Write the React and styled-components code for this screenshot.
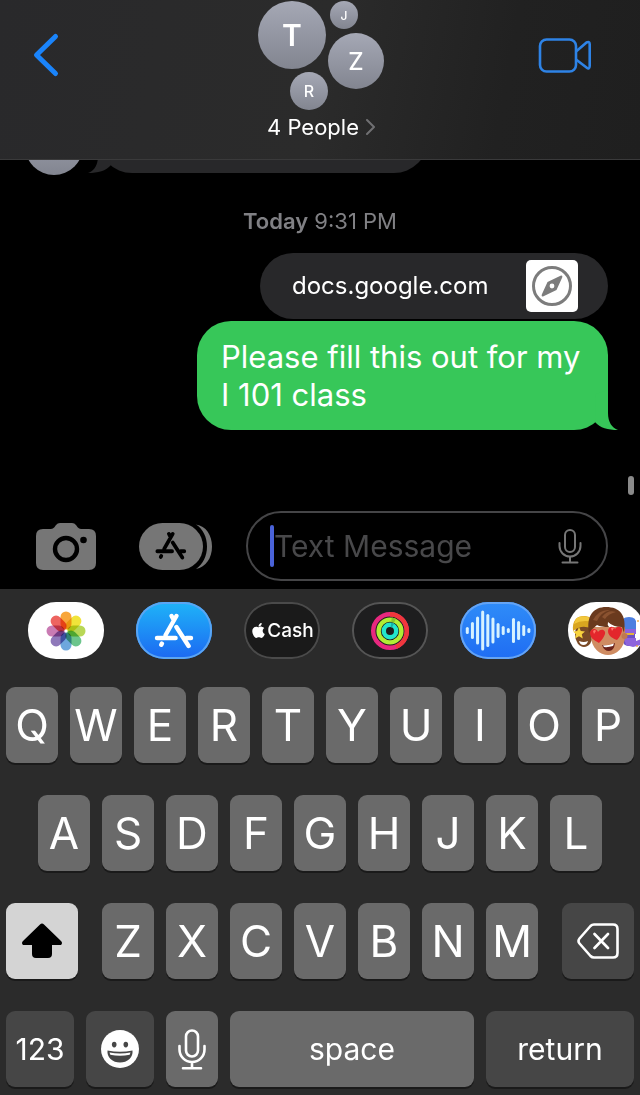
import React from "react";
import styled, { createGlobalStyle } from "styled-components";
import { FaApple } from "react-icons/fa";

const GlobalStyle = createGlobalStyle`
  *, *::before, *::after { box-sizing: border-box; }
  body {
    margin: 0;
    background: #000;
    color: #fff;
    font-family: Inter, "Liberation Sans", sans-serif;
  }
  button {
    font: inherit;
    color: inherit;
    border: 0;
    padding: 0;
    background: none;
    cursor: pointer;
  }
  svg { display: block; }
`;

const Screen = styled.div`
  display: flex;
  flex-direction: column;
  height: 100vh;
  overflow: hidden;
`;

/* ---------- header ---------- */

const Header = styled.header`
  flex: none;
  display: grid;
  grid-template-columns: 1fr auto 1fr;
  align-items: start;
  height: 160px;
  padding: 0 48px 0 32px;
  border-bottom: 1px solid #3a3a3b;
  background: linear-gradient(100deg, #29292b 0%, #2b2b2b 50%, #212121 78%, #1f1f1f 100%);
`;

const BackButton = styled.button`
  justify-self: start;
  margin-top: 32px;
`;

const VideoButton = styled.button`
  justify-self: end;
  margin-top: 36px;
`;

const Group = styled.button`
  display: flex;
  flex-direction: column;
  align-items: center;
  padding-top: 1px;
  margin-left: 18px;
`;

const Cluster = styled.span`
  display: flex;
  height: 110px;
`;

const ClusterColumn = styled.span`
  display: flex;
  flex-direction: column;
  gap: ${(p) => p.$gap}px;
  width: ${(p) => p.$width}px;
`;

const Avatar = styled.span`
  flex: none;
  display: flex;
  align-items: center;
  justify-content: center;
  width: ${(p) => p.$size}px;
  height: ${(p) => p.$size}px;
  align-self: ${(p) => p.$align || "flex-start"};
  margin-left: ${(p) => p.$indent || 0}px;
  border-radius: 50%;
  background: linear-gradient(#a5a8b5, #828590);
  font-size: ${(p) => p.$font || 16}px;
  font-weight: ${(p) => p.$weight || 500};
`;

const GroupLabel = styled.span`
  display: flex;
  align-items: center;
  gap: 7px;
  font-size: 22px;
  line-height: 32px;
`;

/* ---------- thread ---------- */

const Thread = styled.main`
  position: relative;
  flex: 1 1 0;
  min-height: 0;
  display: flex;
  flex-direction: column;
  justify-content: flex-end;
  align-items: flex-end;
  overflow: hidden;
  padding: 0 32px 73px 25px;
  & > * { flex: none; }
`;

const IncomingRow = styled.div`
  display: flex;
  align-items: flex-end;
  gap: 15px;
  align-self: flex-start;
`;

const IncomingBubble = styled.div`
  position: relative;
  width: 330px;
  height: 70px;
  margin-bottom: 2px;
  border-radius: 34px;
  background: #28282a;
`;

const Stamp = styled.time`
  align-self: stretch;
  margin: 31px 0 17px 7px;
  text-align: center;
  font-size: 22px;
  line-height: 30px;
  color: #808084;
  b { font-weight: 600; }
`;

const LinkCard = styled.a`
  display: flex;
  align-items: center;
  justify-content: space-between;
  width: 348px;
  height: 66px;
  padding: 0 30px 0 32px;
  border-radius: 33px;
  background: #28282a;
  color: #fff;
  font-size: 24px;
  line-height: 32px;
  text-decoration: none;
`;

const LinkIcon = styled.span`
  display: grid;
  place-items: center;
  width: 52px;
  height: 52px;
  border-radius: 5px;
  background: #fff;
`;

const Bubble = styled.p`
  position: relative;
  width: 411px;
  margin: 2px 0 0;
  padding: 17px 0 16px 24px;
  border-radius: 34px;
  background: #37c759;
  font-size: 31px;
  line-height: 38px;
`;

const Tail = styled.svg`
  position: absolute;
  bottom: 0;
  ${(p) => (p.$left ? "left: -10px; transform: scaleX(-1);" : "right: -10px;")}
`;

const ScrollThumb = styled.span`
  position: absolute;
  right: 6px;
  bottom: 8px;
  width: 6px;
  height: 19px;
  border-radius: 3px;
  background: #8a8a8a;
`;

/* ---------- compose bar ---------- */

const Compose = styled.form`
  flex: none;
  display: flex;
  align-items: center;
  padding: 8px 32px 8px 36px;
`;

const DrawerButton = styled.button`
  margin: 0 34px 0 43px;
`;

const Field = styled.label`
  flex: 1;
  min-width: 0;
  display: flex;
  align-items: center;
  height: 70px;
  padding: 0 24px 0 22px;
  border: 2px solid #454547;
  border-radius: 35px;
`;

const Caret = styled.span`
  width: 4px;
  height: 42px;
  border-radius: 2px;
  background: #4a63d9;
`;

const TextInput = styled.input`
  flex: 1;
  min-width: 0;
  padding: 0;
  border: 0;
  outline: 0;
  background: none;
  color: #fff;
  font: inherit;
  font-size: 30px;
  line-height: 38px;
  &::placeholder { color: #48484a; opacity: 1; }
`;

/* ---------- keyboard ---------- */

const Dock = styled.section`
  flex: none;
  background: #2b2b2b;
`;

const AppStrip = styled.nav`
  display: flex;
  gap: 32px;
  padding: 13px 0 28px 28px;
  overflow: hidden;
`;

const AppPill = styled.button`
  flex: none;
  display: flex;
  align-items: center;
  justify-content: center;
  width: 76px;
  height: 57px;
  border-radius: 28px;
  overflow: hidden;
  background: ${(p) => p.$bg};
  box-shadow: inset 0 0 0 2px ${(p) => p.$ring || "transparent"};
  font-size: 19px;
  font-weight: 500;
`;

const Keys = styled.div`
  display: flex;
  flex-direction: column;
  gap: 32px;
  padding: 0 6px 8px;
`;

const KeyRow = styled.div`
  display: flex;
  gap: 12px;
  padding: 0 ${(p) => p.$inset || 0}px;
`;

const LetterGroup = styled.div`
  flex: 436 1 0;
  display: flex;
  gap: 12px;
  margin: 0 12px;
`;

const tones = { letter: "#6a6a6a", dark: "#464646", light: "#d4d4d4" };

const Key = styled.button`
  flex: ${(p) => p.$span || 52} 1 0;
  min-width: 0;
  height: 76px;
  display: flex;
  align-items: center;
  justify-content: center;
  border-radius: 9px;
  background: ${(p) => tones[p.$tone || "letter"]};
  box-shadow: 0 2px 0 #1a1a1a;
  font-size: ${(p) => (p.$word ? 30 : 44)}px;
  line-height: 76px;
`;

/* ---------- drawings ---------- */

const StoreGlyph = ({ width, height }) => (
  <svg width={width} height={height} viewBox="0 0 40 36" fill="none" stroke="currentColor" strokeWidth="4.4" strokeLinecap="round">
    <path d="M22.4 3 11.6 22M7.9 30.6 7.3 31.8M17.6 3l2 3.6M22.4 14 34.6 33M3 25h18.6M32.5 25H37" />
  </svg>
);

const Mic = ({ width, height, weight = 2 }) => (
  <svg width={width} height={height} viewBox="0 0 28 41" fill="none" stroke="currentColor" strokeWidth={weight} strokeLinecap="round">
    <rect x="8" y="1.5" width="12" height="26" rx="6" />
    <path d="M1.5 17v3.5a12.5 12.5 0 0 0 25 0V17M14 33v6M5 39.3h18" />
  </svg>
);

const Camera = () => (
  <svg width="60" height="47" viewBox="0 0 60 47">
    <path fill="#767676" d="M7 6h8q2 0 3.400-1.800L20 2q1.500-2 4-2h12q2.500 0 4 2l1.600 2.200Q43 6 45 6h8q7 0 7 7v27q0 7-7 7H7q-7 0-7-7V13q0-7 7-7Z" />
    <circle cx="30" cy="26" r="11" fill="none" stroke="#000" strokeWidth="4.400" />
    <circle cx="47.500" cy="17" r="3.300" fill="#000" />
  </svg>
);

const Drawer = () => (
  <svg width="73" height="47" viewBox="0 0 73 47">
    <path fill="#767676" d="M57 1.500C67 3 73 12 73 23.500S67 44 57 46C64 41 68 33 68 23.500S64 6 57 1.500Z" />
    <rect width="64" height="47" rx="23.500" fill="#767676" />
    <g transform="translate(16 8.500) scale(.79)" fill="none" stroke="#000" strokeWidth="4.800" strokeLinecap="round">
      <path d="M22.400 3 11.600 22M7.900 31l-.6 1.200M17.600 3l2 3.600M22.400 14 34.600 33M3 25h18.600M32.500 25H37" />
    </g>
  </svg>
);

const petals = ["#f79a1f", "#efe01f", "#aed13f", "#58bd7c", "#5a9bd8", "#8067b0", "#c269a8", "#ea4f4a"];

const Petal = styled.rect`
  mix-blend-mode: multiply;
`;

const Photos = () => (
  <svg width="40" height="40" viewBox="-20 -20 40 40">
    {petals.map((c, i) => (
      <Petal key={c} x="-5.500" y="-19.500" width="11" height="18" rx="5.500" fill={c} fillOpacity=".88" transform={`rotate(${i * 45})`} />
    ))}
  </svg>
);

const Rings = () => (
  <svg width="40" height="40" viewBox="-20 -20 40 40" fill="none" strokeWidth="4.400">
    <circle r="16.800" stroke="#e8287f" />
    <path stroke="#f0373c" d="M0-16.800A16.800 16.800 0 0 1 6 15.700" />
    <circle r="11.400" stroke="#b0ee35" />
    <path stroke="#86c62c" d="M1.500-11.300A11.400 11.400 0 0 1 5-10.200" />
    <circle r="6.200" stroke="#22e6cc" />
    <path stroke="#19b0a6" d="M1-6.100A6.200 6.200 0 0 1 3-5.400" />
  </svg>
);

const bars = [7, 17, 28, 40, 33, 26, 15, 9, 5, 25, 19, 11, 5];

const Wave = () => (
  <svg width="76" height="57" viewBox="0 0 76 57" stroke="#d6f2ff" strokeWidth="3" strokeLinecap="round">
    {bars.map((h, i) => {
      const x = 7.3 + i * 5.13;
      return <path key={i} d={`M${x} ${30 - h / 2}V${27 + h / 2}`} />;
    })}
  </svg>
);

const Memoji = () => (
  <svg width="76" height="57" viewBox="0 0 76 57">
    <ellipse cx="16" cy="32" rx="9" ry="13" fill="#7a4a26" />
    <path fill="#d9a520" d="M5 29C4 18 9 14 16 14s10 4 10 14Q15 21 5 29Z" />
    <path fill="#f3c83c" d="M6 22q8-5 19-2l-1-3q-8-5-16-.5Z" />
    <path fill="#f8d33e" d="m11 25 1.800 4 4.200.4-3.200 2.800 1 4.200-3.800-2.200L7 36.400l1-4.200-3-2.800 4.200-.4Z" />
    <path fill="#fff" d="M11 39q5 2 9 0-1 4-4.500 4T11 39Z" />
    <rect x="55" y="18" width="12" height="26" rx="5" fill="#6b51c5" />
    <path fill="#4d7fe0" d="M53 22q0-7 8-7t7 7v6H53Z" />
    <path fill="#8d63dc" d="M53 27h15v5H53ZM56 36h12v3l8-3-3 7-8 2-7-2Z" />
    <path fill="#e3b23c" d="M56 31h10v2H56Z" />
    <g fill="#f0a63a"><circle cx="70" cy="19" r=".9" /><circle cx="69" cy="44" r=".9" /></g>
    <path fill="#cf8c62" d="M23 25h34v9c0 12-9 19-17 19s-17-7-17-19Z" />
    <circle cx="56.500" cy="34" r="3" fill="#bf7850" />
    <path fill="#6a3a1e" d="M21 31C18 13 26 5 38 5c14 0 21 8 18 26l-2-6q-9 0-14-5-1 3 1 5-8 0-12-2-4 3-8 8Z" />
    <path fill="#8a5230" d="M25 18Q31 7 42 8q-9 2-13 11ZM34 15q6-8 14-5-8 2-11 7Z" />
    <path fill="#e3262c" d="M31 41c-6-3-9-6-9-10s6-6 8-1c3-4 8-2 7 2-1 3-3 6-6 9ZM49 38c-6-2-9-5-9-9s5-6 7-2c3-4 8-2 7 2-1 3-2 6-5 9Z" />
    <path fill="#ff7568" d="M25 29q2-2 3 0l-2 3ZM43 26q2-1 3 0l-2 3Z" />
    <path fill="#6b241b" d="M34 43q7 1 13-2-1 8-6 8-5 0-7-6Z" />
    <path fill="#fff" d="M35 43.500q6 0 11-2l-1 2.500q-5 1.500-9 1Z" />
  </svg>
);

const TailShape = ({ left, fill }) => (
  <Tail $left={left} width="30" height="40" viewBox="0 0 30 40">
    <path fill={fill} d="M20 0V23C20 32 24 38 30 40C20 40 12 38 7 32L8 4Z" />
  </Tail>
);

const letters = (row) => row.split("").map((l) => <Key type="button" key={l}>{l}</Key>);

export default function App() {
  return (
    <Screen>
      <GlobalStyle />
      <Header>
        <BackButton aria-label="Back">
          <svg width="28" height="46" viewBox="0 0 28 46" fill="none" stroke="#1a84fb" strokeWidth="5" strokeLinecap="round" strokeLinejoin="round">
            <path d="M23.500 4.500 4.500 23 23.500 41.500" />
          </svg>
        </BackButton>
        <Group>
          <Cluster>
            <ClusterColumn $width={70} $gap={3}>
              <Avatar $size={68} $font={30} $weight={600}>T</Avatar>
              <Avatar $size={38} $align="flex-end">R</Avatar>
            </ClusterColumn>
            <ClusterColumn $width={56} $gap={4}>
              <Avatar $size={28} $font={12} $indent={2}>J</Avatar>
              <Avatar $size={56} $font={24}>Z</Avatar>
            </ClusterColumn>
          </Cluster>
          <GroupLabel>
            4 People
            <svg width="9" height="16" viewBox="0 0 9 16" fill="none" stroke="#707073" strokeWidth="2" strokeLinecap="round" strokeLinejoin="round">
              <path d="M1 1l7 7-7 7" />
            </svg>
          </GroupLabel>
        </Group>
        <VideoButton aria-label="Video call">
          <svg width="54" height="38" viewBox="0 0 54 38" fill="none" stroke="#2e83e6" strokeWidth="2.600" strokeLinejoin="round">
            <rect x="2" y="3.500" width="36" height="32" rx="6.500" />
            <path d="M38 15.500 48.500 6.500Q51.500 5 51.700 8V30Q51.500 34 48.500 31.500L38 23.500" />
          </svg>
        </VideoButton>
      </Header>

      <Thread>
        <IncomingRow>
          <Avatar $size={58} $align="flex-end" />
          <IncomingBubble>
            <TailShape left fill="#28282a" />
          </IncomingBubble>
        </IncomingRow>
        <Stamp><b>Today</b> 9:31 PM</Stamp>
        <LinkCard href="#docs">
          docs.google.com
          <LinkIcon>
            <svg width="40" height="40" viewBox="0 0 40 40">
              <circle cx="20" cy="20" r="18.500" fill="none" stroke="#7c7c7c" strokeWidth="3" />
              <path fill="#7c7c7c" fillRule="evenodd" d="M28.500 9.800Q31 9 30.200 11.500L24.500 24 11.500 30.200Q9 31 9.800 28.500L15.500 16ZM20 17.600a2.400 2.400 0 1 0 0 4.800 2.400 2.400 0 0 0 0-4.800Z" />
            </svg>
          </LinkIcon>
        </LinkCard>
        <Bubble>
          Please fill this out for my<br />I 101 class
          <TailShape fill="#37c759" />
        </Bubble>
        <ScrollThumb />
      </Thread>

      <Compose onSubmit={(e) => e.preventDefault()}>
        <button type="button" aria-label="Camera"><Camera /></button>
        <DrawerButton type="button" aria-label="Apps"><Drawer /></DrawerButton>
        <Field>
          <Caret />
          <TextInput type="text" placeholder="Text Message" aria-label="Text Message" />
          <svg width="24" height="35" viewBox="0 0 24 35" fill="none" stroke="#767676" strokeWidth="2" strokeLinecap="round">
            <rect x="7" y="1" width="10" height="22" rx="5" />
            <path d="M1.500 14v3a10.500 10.500 0 0 0 21 0v-3M12 28v5M4.500 33.500h15" />
          </svg>
        </Field>
      </Compose>

      <Dock>
        <AppStrip aria-label="Message apps">
          <AppPill $bg="#fff" aria-label="Photos"><Photos /></AppPill>
          <AppPill $bg="linear-gradient(#1fb4f8, #1c68f2)" $ring="#5aa5f3" aria-label="App Store"><StoreGlyph width={40} height={36} /></AppPill>
          <AppPill $bg="#1a1a1a" $ring="#4a4a4a"><FaApple size={17} />Cash</AppPill>
          <AppPill $bg="#1e1e1f" $ring="#555" aria-label="Fitness"><Rings /></AppPill>
          <AppPill $bg="linear-gradient(#2f8cf8, #1f6df3)" $ring="#64a4f5" aria-label="Audio"><Wave /></AppPill>
          <AppPill $bg="#fff" aria-label="Memoji"><Memoji /></AppPill>
        </AppStrip>
        <Keys>
          <KeyRow>{letters("QWERTYUIOP")}</KeyRow>
          <KeyRow $inset={32}>{letters("ASDFGHJKL")}</KeyRow>
          <KeyRow>
            <Key $tone="light" $span={72} aria-label="Shift">
              <svg width="40" height="36" viewBox="0 0 40 36">
                <path d="M18 1.500q2-2 4 0L39 18q2 2 0 4H30V31q0 4-4 4H14q-4 0-4-4V22H1q-2-2 0-4Z" />
              </svg>
            </Key>
            <LetterGroup>{letters("ZXCVBNM")}</LetterGroup>
            <Key $tone="dark" $span={72} aria-label="Delete">
              <svg width="42" height="36" viewBox="0 0 42 36" fill="none" stroke="#fff" strokeWidth="2.600" strokeLinecap="round" strokeLinejoin="round">
                <path d="M17 1.500H36Q40.500 1.500 40.500 6V30Q40.500 34.500 36 34.500H17Q15 34.500 13.500 33L2.500 20.500Q.5 18 2.500 15.500L13.500 3Q15 1.500 17 1.500ZM17.500 11 31 25M31 11 17.500 25" />
              </svg>
            </Key>
          </KeyRow>
          <KeyRow>
            <Key $tone="dark" $span={68} $word>123</Key>
            <Key $tone="dark" $span={68} aria-label="Emoji">
              <svg width="38" height="38" viewBox="0 0 38 38">
                <circle cx="19" cy="19" r="19" fill="#fff" />
                <g fill="#464646">
                  <ellipse cx="13.200" cy="14.600" rx="2.300" ry="2.800" />
                  <ellipse cx="24.800" cy="14.600" rx="2.300" ry="2.800" />
                  <path d="M6.500 20.500q12.500 2.500 25 0 .5 5-3 8.500-4 3.500-9.500 3.500T9.500 29q-3.500-3.500-3-8.500Z" />
                </g>
                <path fill="#fff" d="M8.500 22.500q10.500 2 21 0l-.8 2.300q-9.700 2-19.400 0Z" />
              </svg>
            </Key>
            <Key aria-label="Dictate"><Mic width={28} height={41} weight={2.6} /></Key>
            <Key $span={244} $word>space</Key>
            <Key $tone="dark" $span={148} $word>return</Key>
          </KeyRow>
        </Keys>
      </Dock>
    </Screen>
  );
}
